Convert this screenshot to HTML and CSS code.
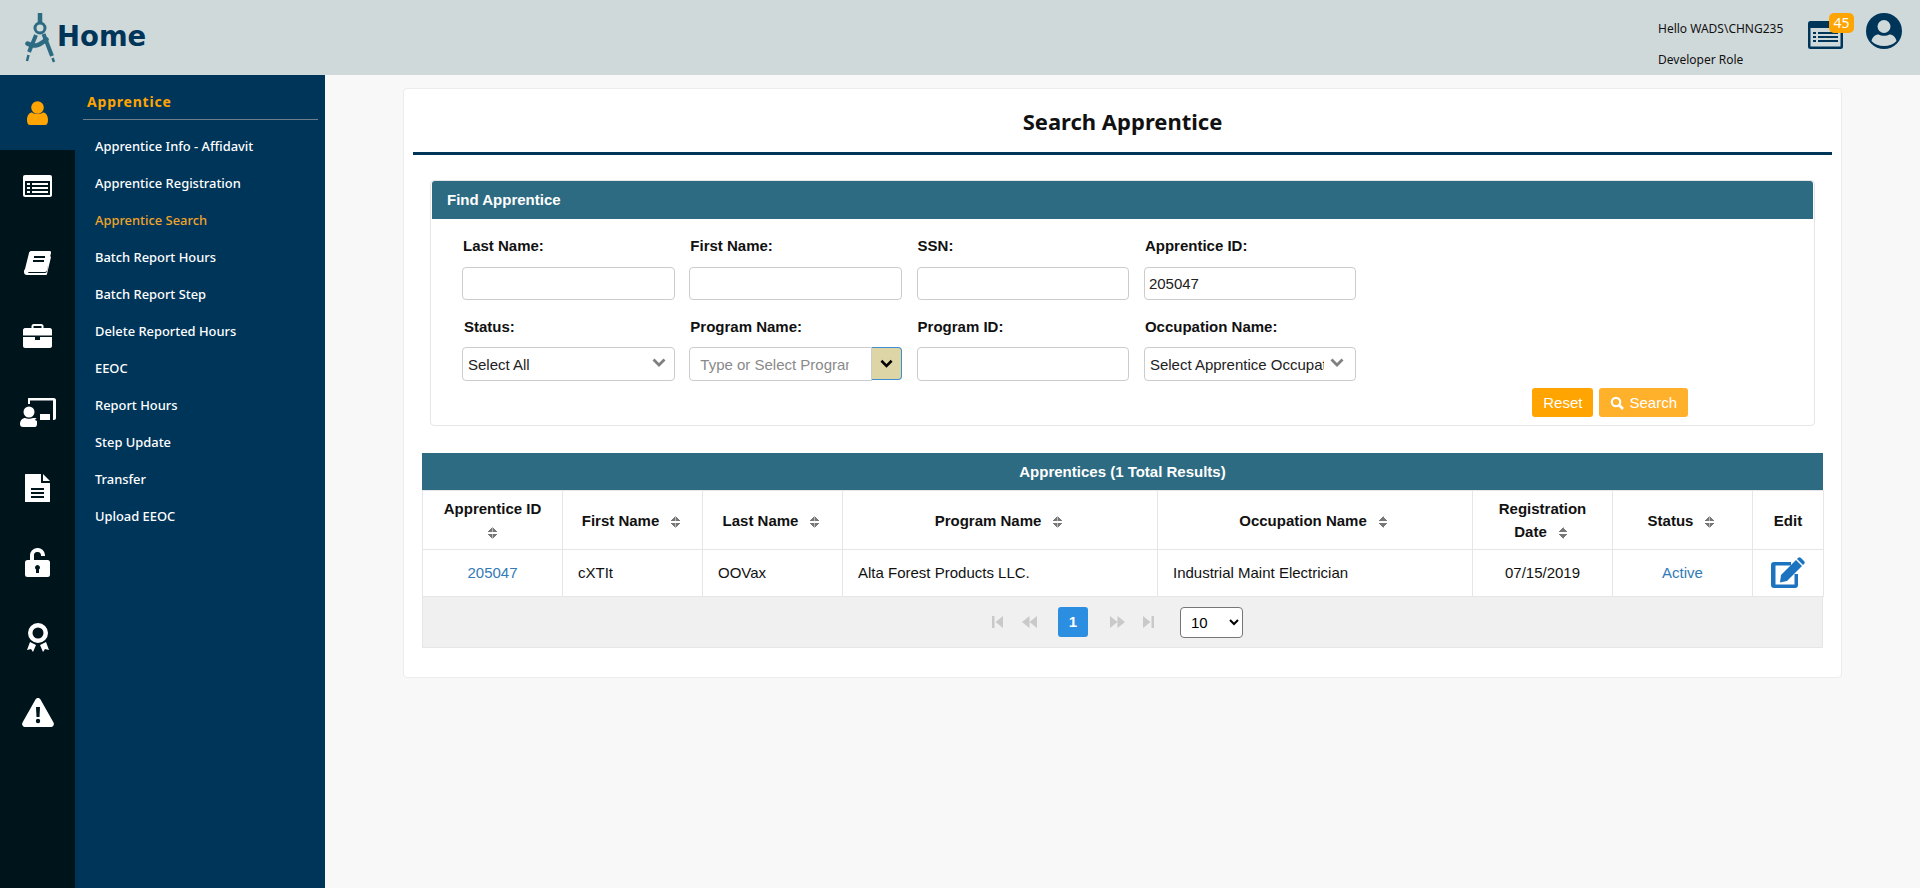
FILE: index.html
```html
<!DOCTYPE html>
<html lang="en">
<head>
    <meta charset="UTF-8">
    <meta name="viewport" content="width=device-width, initial-scale=1.0">
    <title>Search Apprentice</title>
    <link rel="stylesheet" href="styles.css">
</head>
<body>
    <header class="topbar">
        <div class="brand">
            <svg class="brand-logo" viewBox="0 0 32 50" fill="none" stroke="#2d6b82">
                <path d="M15 0v9" stroke-width="4.500" stroke-linecap="round"/>
                <circle cx="15" cy="15" r="5" stroke-width="3"/>
                <path d="M11 22 4 39M18.500 21 27 43" stroke-width="4"/>
                <path d="M2.500 30.500c7 4.500 13 1 19-4" stroke-width="4.500" stroke-linecap="round"/>
                <path d="M3.500 42 2 48M27.500 45l1.500 4" stroke-width="2.500"/>
            </svg>
            <span class="brand-text">Home</span>
        </div>
        <div class="user">
            <div class="user-text">
                <p>Hello WADS\CHNG235</p>
                <p>Developer Role</p>
            </div>
            <div class="notice">
                <svg viewBox="0 0 35 28" width="35" height="28">
                    <rect x="0" y="0" width="35" height="28" rx="2.500" fill="#00355a"/>
                    <rect x="2.500" y="7" width="30" height="18.500" fill="#d0d9da"/>
                    <path d="M5 11h3v2H5zM10 11h20v2H10zM5 15h3v2H5zM10 15h20v2H10zM5 19h3v2H5zM10 19h20v2H10z" fill="#00355a"/>
                </svg>
                <span class="notice-badge">45</span>
            </div>
            <svg class="avatar" viewBox="0 0 36 36" width="36" height="36">
                <circle cx="18" cy="18" r="18" fill="#00355a"/>
                <circle cx="18" cy="13.500" r="6.500" fill="#d0d9da"/>
                <path d="M5.500 28c1-4 3.500-6.500 7-6.500 3 1.800 8 1.800 11 0 3.500 0 6 2.500 7 6.500-3 3.500-7.500 5-12.500 5s-9.500-1.500-12.500-5z" fill="#d0d9da"/>
            </svg>
        </div>
    </header>

    <div class="layout">
        <nav class="rail">
            <a class="rail-item active">
                <svg viewBox="0 0 21 24" width="21" height="24" fill="#ffa400">
                    <circle cx="10.500" cy="6.500" r="6.300"/>
                    <path d="M0 19c0-5 2.500-7.500 5-7.500 3 2 8 2 11 0 2.500 0 5 2.500 5 7.500 0 3-1 5-3 5H3c-2 0-3-2-3-5z"/>
                </svg>
            </a>
            <a class="rail-item nudge-up">
                <svg viewBox="0 0 29 22" width="29" height="22">
                    <rect width="29" height="22" rx="2" fill="#fff"/>
                    <rect x="2" y="6" width="25" height="14" fill="#00141c"/>
                    <path d="M4 8h3v2H4zM9 8h16v2H9zM4 12h3v2H4zM9 12h16v2H9zM4 16h3v2H4zM9 16h16v2H9z" fill="#fff"/>
                </svg>
            </a>
            <a class="rail-item">
                <svg viewBox="0 0 27 24" width="27" height="24">
                    <path d="M7 0h19c1 0 1 1 1 2l-4 17c0 1-1 2-2 2H6c-2 0-3 1-1 1h16c1 0 2-1 2-2l3-15 1 1-4 17c0 1-1 1-2 1H3c-2 0-3-1-3-3 0-1 0-2 1-3L5 2c0-1 1-2 2-2z" fill="#fff"/>
                    <path d="M10 5h11v2H10zM9 9h11v2H9z" fill="#00141c"/>
                </svg>
            </a>
            <a class="rail-item nudge-up">
                <svg viewBox="0 0 29 24" width="29" height="24" fill="#fff">
                    <path d="M8.500 5V2c0-1 1-2 2-2h8c1 0 2 1 2 2v3h-2V2h-8v3z"/>
                    <path d="M2 4h25c1 0 2 1 2 2v5.500H0V6c0-1 1-2 2-2z"/>
                    <path d="M0 13h12v3h5v-3h12v9c0 1-1 2-2 2H2c-1 0-2-1-2-2z"/>
                </svg>
            </a>
            <a class="rail-item">
                <svg viewBox="0 0 36 29" width="36" height="29" fill="#fff">
                    <path d="M9 0h25c1 0 2 1 2 2v18c0 1-1 2-2 2h-1V2.500H10V6H8V1c0-1 0-1 1-1z"/>
                    <path d="M20 16h10v6H20z"/>
                    <circle cx="9" cy="14" r="5.500"/>
                    <path d="M0 26c0-4 3-6 5-6 2 1 6 1 8 0h4c-1 0-2 2-2 2l2 1v3c0 2-1 3-2 3H3c-2 0-3-1-3-3z"/>
                </svg>
            </a>
            <a class="rail-item">
                <svg viewBox="0 0 25 28" width="25" height="28">
                    <path d="M1 0h15v8c0 1 0 1 1 1h8v18c0 1 0 1-1 1H1c-1 0-1 0-1-1V1c0-1 0-1 1-1z" fill="#fff"/>
                    <path d="M18 0l7 7h-7z" fill="#fff"/>
                    <path d="M6 14h13v2H6zM6 18h13v2H6zM6 22h13v2H6z" fill="#00141c"/>
                </svg>
            </a>
            <a class="rail-item">
                <svg viewBox="0 0 25 29" width="25" height="29">
                    <path d="M5 13V8a7.500 7.500 0 0 1 15-1v1h-4V7a3.500 3.500 0 0 0-7 1v5z" fill="#fff"/>
                    <rect y="12" width="25" height="17" rx="2.500" fill="#fff"/>
                    <path d="M12.500 17a2.500 2.500 0 0 1 1.500 4.500V25h-3v-3.500a2.500 2.500 0 0 1 1.500-4.500z" fill="#00141c"/>
                </svg>
            </a>
            <a class="rail-item">
                <svg viewBox="0 0 22 29" width="22" height="29" fill="#fff">
                    <path fill-rule="evenodd" d="M11 0a10 10 0 1 1 0 20 10 10 0 0 1 0-20zm0 4.500a5.500 5.500 0 1 0 0 11 5.500 5.500 0 0 0 0-11z"/>
                    <path d="M3 19l6 3-3 7-2-3-4 1zM19 19l-6 3 3 7 2-3 4 1z"/>
                </svg>
            </a>
            <a class="rail-item">
                <svg viewBox="0 0 32 29" width="32" height="29">
                    <path d="M16 0c1 0 2 .500 2.500 1.500l13 23c1 2 0 4.500-2.500 4.500H3c-2.500 0-3.500-2.500-2.500-4.500l13-23C14 .500 15 0 16 0z" fill="#fff"/>
                    <path d="M14 9h4l-.5 10h-3z" fill="#00141c"/>
                    <circle cx="16" cy="23" r="2.200" fill="#00141c"/>
                </svg>
            </a>
        </nav>

        <aside class="subnav">
            <h3 class="subnav-title">Apprentice</h3>
            <ul class="subnav-list">
                <li>Apprentice Info - Affidavit</li>
                <li>Apprentice Registration</li>
                <li class="current">Apprentice Search</li>
                <li>Batch Report Hours</li>
                <li>Batch Report Step</li>
                <li>Delete Reported Hours</li>
                <li>EEOC</li>
                <li>Report Hours</li>
                <li>Step Update</li>
                <li>Transfer</li>
                <li>Upload EEOC</li>
            </ul>
        </aside>

        <main class="content">
            <section class="card">
                <h1 class="card-title">Search Apprentice</h1>

                <div class="panel">
                    <h2 class="panel-head">Find Apprentice</h2>
                    <form class="search-form">
                        <div class="field">
                            <label>Last Name:</label>
                            <input type="text">
                        </div>
                        <div class="field">
                            <label>First Name:</label>
                            <input type="text">
                        </div>
                        <div class="field">
                            <label>SSN:</label>
                            <input type="text">
                        </div>
                        <div class="field">
                            <label>Apprentice ID:</label>
                            <input type="text" value="205047">
                        </div>
                        <div class="field">
                            <label class="nudge">Status:</label>
                            <div class="select-box">
                                <select class="tall"><option>Select All</option></select>
                                <svg class="chevron" viewBox="0 0 14 9"><path d="M1.500 1.500 7 7l5.500-5.500" fill="none" stroke="#808080" stroke-width="2.800"/></svg>
                            </div>
                        </div>
                        <div class="field">
                            <label>Program Name:</label>
                            <div class="combo">
                                <input type="text" class="tall" placeholder="Type or Select Program Name">
                                <button type="button" class="combo-btn">
                                    <svg viewBox="0 0 14 9" width="13" height="9"><path d="M1.500 1.500 7 7l5.500-5.500" fill="none" stroke="#000" stroke-width="2.800"/></svg>
                                </button>
                            </div>
                        </div>
                        <div class="field">
                            <label>Program ID:</label>
                            <input type="text" class="tall">
                        </div>
                        <div class="field">
                            <label>Occupation Name:</label>
                            <div class="select-box">
                                <select class="tall"><option>Select Apprentice Occupation</option></select>
                                <svg class="chevron far" viewBox="0 0 14 9"><path d="M1.500 1.500 7 7l5.500-5.500" fill="none" stroke="#808080" stroke-width="2.800"/></svg>
                            </div>
                        </div>
                    </form>
                    <div class="form-actions">
                        <button type="button" class="btn">Reset</button>
                        <button type="button" class="btn btn-search">
                            <svg viewBox="0 0 14 14" width="14" height="14"><circle cx="6" cy="6" r="4.200" fill="none" stroke="#fff" stroke-width="2.200"/><path d="M9 9l4 4" stroke="#fff" stroke-width="2.600"/></svg>
                            Search
                        </button>
                    </div>
                </div>

                <div class="results">
                    <div class="results-head">Apprentices (1 Total Results)</div>
                    <table class="grid">
                        <colgroup>
                            <col class="col-narrow"><col class="col-narrow"><col class="col-narrow">
                            <col class="col-wide"><col class="col-wide">
                            <col class="col-narrow"><col class="col-narrow"><col class="col-edit">
                        </colgroup>
                        <thead>
                            <tr>
                                <th>Apprentice ID<br><i class="sort first-line"></i></th>
                                <th>First Name<i class="sort"></i></th>
                                <th>Last Name<i class="sort"></i></th>
                                <th>Program Name<i class="sort"></i></th>
                                <th>Occupation Name<i class="sort"></i></th>
                                <th>Registration<br>Date<i class="sort"></i></th>
                                <th>Status<i class="sort"></i></th>
                                <th>Edit</th>
                            </tr>
                        </thead>
                        <tbody>
                            <tr>
                                <td class="center"><a class="link">205047</a></td>
                                <td>cXTIt</td>
                                <td>OOVax</td>
                                <td>Alta Forest Products LLC.</td>
                                <td>Industrial Maint Electrician</td>
                                <td class="center">07/15/2019</td>
                                <td class="center"><a class="link">Active</a></td>
                                <td class="center edit-cell">
                                    <svg viewBox="0 0 34 32" width="34" height="32">
                                        <path d="M3 5h17v3.500H4.500v19h19V17H27v11c0 2-1 3-3 3H3c-2 0-3-1-3-3V8c0-2 1-3 3-3z" fill="#1c73c0"/>
                                        <path d="M25 3l6 6-15 15-7 1.500L10 18z" fill="#1c73c0"/>
                                        <path d="M27 1c1-1 2-1 3 0l3 3c1 1 1 2 0 3l-1 1-6-6z" fill="#1c73c0"/>
                                    </svg>
                                </td>
                            </tr>
                        </tbody>
                    </table>
                    <div class="pager">
                        <svg class="pager-icon first" viewBox="0 0 11 12" width="11" height="12"><path d="M0 0h2.500v12H0zM11 0v12L3.500 6z"/></svg>
                        <svg class="pager-icon prev" viewBox="0 0 15 12" width="15" height="12"><path d="M7.500 0v12L0 6zM15 0v12L7.500 6z"/></svg>
                        <span class="page-num">1</span>
                        <svg class="pager-icon next" viewBox="0 0 15 12" width="15" height="12"><path d="M0 0v12l7.500-6zM7.500 0v12L15 6z"/></svg>
                        <svg class="pager-icon last" viewBox="0 0 11 12" width="11" height="12"><path d="M0 0v12l7.500-6zM8.500 0H11v12H8.500z"/></svg>
                        <select class="page-size"><option>10</option></select>
                    </div>
                </div>
            </section>
        </main>
    </div>
</body>
</html>
```

FILE: styles.css
```css
* {
    box-sizing: border-box;
}
html, body {
    height: 100%;
}
body {
    margin: 0;
    font-family: "Liberation Sans", Arial, sans-serif;
    font-size: 15px;
    color: #111;
    background-color: #f8f8f8;
    display: flex;
    flex-direction: column;
    overflow: hidden;
}

/* top bar */
.topbar {
    height: 75px;
    flex: none;
    background-color: #d0d9da;
    display: flex;
    justify-content: space-between;
    padding: 13px 18px 0 25px;
}
.brand {
    display: flex;
    align-items: flex-start;
}
.brand-logo {
    width: 32px;
    height: 50px;
}
.brand-text {
    font-family: "DejaVu Sans", Verdana, sans-serif;
    font-weight: bold;
    font-size: 27.500px;
    line-height: 36px;
    color: #00355a;
    margin-top: 5px;
}
.user {
    display: flex;
    align-items: flex-start;
}
.user-text {
    font-family: "Noto Sans", sans-serif;
    font-size: 12px;
    margin-top: 7px;
    margin-right: 62px;
    width: 88px;
    white-space: nowrap;
}
.user-text p {
    margin: 0 0 14px;
    line-height: 17px;
}
.notice {
    position: relative;
    margin-top: 8px;
    margin-right: 23px;
    width: 35px;
}
.notice-badge {
    position: absolute;
    top: -8px;
    left: 21px;
    width: 25px;
    height: 20px;
    background-color: #ffa400;
    border-radius: 5px;
    color: #fff;
    font-family: "Noto Sans", sans-serif;
    font-size: 14px;
    line-height: 20px;
    text-align: center;
}

/* left navigation */
.layout {
    flex: 1;
    display: flex;
    min-height: 0;
}
.rail {
    width: 75px;
    flex: none;
    background-color: #00141c;
}
.rail-item {
    height: 75px;
    display: flex;
    align-items: center;
    justify-content: center;
}
.rail-item.active {
    background-color: #00355a;
}
.rail-item.nudge-up svg {
    margin-bottom: 3px;
}
.subnav {
    width: 250px;
    flex: none;
    background-color: #00355a;
    padding: 18px 7px 0 8px;
}
.subnav-title {
    margin: 0;
    padding: 0 0 8px 4px;
    border-bottom: 1px solid #6f7f8b;
    font-family: "Noto Sans", sans-serif;
    font-size: 14px;
    line-height: 18px;
    font-weight: bold;
    letter-spacing: 0.800px;
    color: #ffa400;
}
.subnav-list {
    list-style: none;
    margin: 8px 0 0;
    padding: 0 0 0 12px;
}
.subnav-list li {
    height: 37px;
    line-height: 36px;
    font-family: "Noto Sans", sans-serif;
    font-size: 12.900px;
    font-weight: 500;
    color: #fff;
}
.subnav-list li.current {
    color: #f0a42a;
}

/* main content */
.content {
    flex: 1;
    padding: 13px 78px 0;
    min-width: 0;
}
.card {
    height: 590px;
    background-color: #fff;
    border: 1px solid #ececec;
    border-radius: 4px;
    padding: 0 9px;
}
.card-title {
    margin: 0;
    height: 66px;
    border-bottom: 3px solid #00355a;
    text-align: center;
    font-family: "Noto Sans", sans-serif;
    font-size: 22px;
    font-weight: bold;
    line-height: 64px;
}
.panel {
    margin: 25px 17px 0;
    height: 246px;
    border: 1px solid #e6e6e6;
    border-radius: 4px;
    position: relative;
}
.panel-head {
    margin: 0 1px;
    height: 38px;
    background-color: #2d6b82;
    border-radius: 3px 3px 0 0;
    color: #fff;
    font-size: 15px;
    font-weight: bold;
    line-height: 37px;
    padding-left: 15px;
}
.search-form {
    display: grid;
    grid-template-columns: repeat(4, 212.500px);
    column-gap: 14.800px;
    padding: 19px 0 0 31px;
}
.field {
    display: flex;
    flex-direction: column;
}
.field label {
    font-weight: bold;
    font-size: 15px;
    line-height: 16px;
    height: 29px;
    padding: 0 0 0 1px;
}
.field label.nudge {
    padding-left: 2px;
}
.field:nth-child(n+5) label {
    height: 28px;
    margin-top: 19px;
}
.field input, .field select {
    width: 100%;
    height: 33px;
    border: 1px solid #ccc;
    border-radius: 4px;
    background-color: #fff;
    font-family: "Liberation Sans", Arial, sans-serif;
    font-size: 15px;
    color: #222;
    padding: 0 4px;
    outline: none;
}
.field .tall {
    height: 34px;
}
.field select {
    appearance: none;
    padding: 0 31px 0 5px;
}
.field input::placeholder {
    color: #8a8a8a;
}
.select-box {
    position: relative;
}
.chevron {
    position: absolute;
    top: 11px;
    right: 9px;
    width: 14px;
    height: 9px;
}
.chevron.far {
    right: 12px;
}
.combo {
    display: flex;
}
.combo input {
    border-radius: 4px 0 0 4px;
    flex: 1;
    min-width: 0;
    padding: 0 22px 0 10px;
}
.combo-btn {
    width: 30px;
    height: 33px;
    flex: none;
    background-color: #ded5a6;
    border: 1px solid #3e8ed0;
    border-left: none;
    border-radius: 0 4px 4px 0;
    padding: 0;
    display: flex;
    align-items: center;
    justify-content: center;
}
.form-actions {
    position: absolute;
    top: 207px;
    right: 126px;
    display: flex;
    gap: 6px;
}
.btn {
    height: 29px;
    padding: 0 11px;
    background-color: #ffa400;
    border: none;
    border-radius: 3px;
    color: #fff;
    font-family: "Liberation Sans", Arial, sans-serif;
    font-size: 15px;
    display: flex;
    align-items: center;
    gap: 5px;
}
.btn-search {
    background-color: #ffb12b;
}

/* results grid */
.results {
    margin: 27px 9px 0;
}
.results-head {
    height: 37px;
    background-color: #2d6b82;
    color: #fff;
    font-weight: bold;
    font-size: 15px;
    line-height: 37px;
    text-align: center;
}
.grid {
    width: 100%;
    border-collapse: collapse;
    table-layout: fixed;
}
.col-narrow {
    width: 140px;
}
.col-wide {
    width: 315px;
}
.col-edit {
    width: 71px;
}
.grid th, .grid td {
    border: 1px solid #e6e6e6;
    font-size: 15px;
}
.grid th {
    height: 59px;
    padding: 0;
    line-height: 23px;
    font-weight: bold;
    text-align: center;
}
.grid td {
    height: 47px;
    padding: 0 15px 2px;
}
.grid td.center {
    text-align: center;
    padding: 0 0 2px;
}
.grid td.edit-cell {
    padding: 0;
}
.link {
    color: #337ab7;
}
.edit-cell svg {
    display: block;
    margin: 0 auto;
}
.sort {
    display: inline-block;
    vertical-align: middle;
    width: 9px;
    height: 12px;
    margin: 0 3px 0 12px;
    background:
        linear-gradient(to bottom right, transparent 50%, #777 50%) left top / 50% 5px no-repeat,
        linear-gradient(to bottom left, transparent 50%, #777 50%) right top / 50% 5px no-repeat,
        linear-gradient(to top right, transparent 50%, #777 50%) left bottom / 50% 5px no-repeat,
        linear-gradient(to top left, transparent 50%, #777 50%) right bottom / 50% 5px no-repeat;
}
.sort.first-line {
    margin: 0;
}
.pager {
    height: 51px;
    background-color: #f0f0f0;
    border: 1px solid #e6e6e6;
    border-top: none;
    display: flex;
    align-items: center;
    padding-left: 569px;
}
.pager-icon {
    fill: #c9c9c9;
}
.first {
    margin-right: 19px;
}
.prev {
    margin-right: 21px;
}
.page-num {
    width: 30px;
    height: 30px;
    background-color: #2b8ee0;
    border-radius: 3px;
    color: #fff;
    font-weight: bold;
    text-align: center;
    line-height: 30px;
}
.next {
    margin-left: 22px;
}
.last {
    margin-left: 18px;
}
.page-size {
    margin-left: 26px;
    width: 63px;
    height: 31px;
    border: 1px solid #767676;
    border-radius: 4px;
    background-color: #fff;
    font-family: "Liberation Sans", Arial, sans-serif;
    font-size: 15px;
    padding-left: 6px;
}
```
